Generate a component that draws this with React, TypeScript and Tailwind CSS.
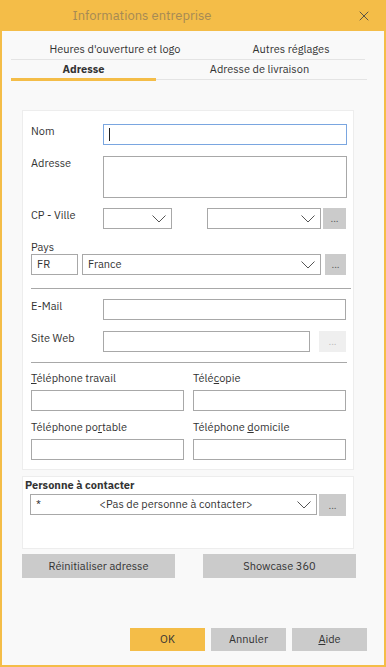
import { X } from 'lucide-react';

const font = { fontFamily: '"IBM Plex Sans", "Liberation Sans", "Noto Sans", sans-serif' };

function Chevron() {
    return (
        <svg width="14" height="8" viewBox="0 0 14 8" className="text-[#555] shrink-0">
            <polyline points="0.5,0.5 7,7 13.5,0.5" fill="none" stroke="currentColor" strokeWidth="1" />
        </svg>
    );
}

function Select({ w, text, star }: { w: string; text?: string; star?: boolean }) {
    return (
        <div className={`${w} h-[21px] border border-[#a8a8a8] bg-white flex items-center pl-[5px] pr-[5px] text-[11px] text-[#333]`}>
            {star && <span className="mr-1">*</span>}
            <span className={star ? 'flex-1 text-center pl-[10px]' : 'flex-1'}>{text}</span>
            <Chevron />
        </div>
    );
}

function Dots({ disabled, w = 'w-[21px]', h = 'h-[21px]' }: { disabled?: boolean; w?: string; h?: string }) {
    return (
        <div className={`${w} ${h} flex items-center justify-center text-[10px] ${disabled ? 'bg-[#efefef] text-[#bbb]' : 'bg-[#cbcbcb] text-[#555]'}`}>
            ...
        </div>
    );
}

function Input({ w, h = 'h-[21px]', children, focus }: { w: string; h?: string; children?: React.ReactNode; focus?: boolean }) {
    return (
        <div className={`${w} ${h} bg-white border flex items-center pl-[5px] text-[11px] text-[#333] ${focus ? 'border-[#7aa6e0]' : 'border-[#a8a8a8]'}`}>
            {children}
        </div>
    );
}

function Btn({ label, className }: { label: React.ReactNode; className: string }) {
    return <div className={`h-[23px] flex items-center justify-center text-[11px] text-[#333] ${className}`}>{label}</div>;
}

export default function App() {
    return (
        <div style={font} className="w-[386px] h-[667px] bg-[#f9f9f9] border-2 border-t-0 border-[#f4bd48] flex flex-col">
            {/* Title bar */}
            <div className="h-[31px] -mx-[2px] bg-[#f4bd48] flex items-center relative">
                <div className="w-[284px] text-center text-[13px] text-[#a58a55]">Informations entreprise</div>
                <X size={16} strokeWidth={1.3} className="absolute right-[14px] top-[8px] text-[#444]" />
            </div>

            {/* Tabs */}
            <div className="ml-[9px] mt-[9px] text-[11px] text-[#333]">
                <div className="flex w-[354px] border-b border-[#e4e4e4] h-[20px]">
                    <div className="w-[208px] text-center leading-[18px]">Heures d'ouverture et logo</div>
                    <div className="w-[144px] text-center leading-[18px]">Autres réglages</div>
                </div>
                <div className="flex w-[356px] h-[20px] border-b border-[#e4e4e4]">
                    <div className="w-[145px] text-center font-bold leading-[18px] border-b-[3px] border-[#f4bd48] -mb-[2px]">Adresse</div>
                    <div className="w-[207px] text-center leading-[18px]">Adresse de livraison</div>
                </div>
            </div>

            {/* Address panel */}
            <div className="ml-[20px] mt-[30px] w-[332px] h-[360px] bg-white border border-[#ededed] pl-[8px] pr-[6px] text-[11px] text-[#333]">
                <div className="flex mt-[13px] items-start">
                    <div className="w-[72px] leading-[15px]">Nom</div>
                    <Input w="w-[244px]" focus>
                        <span className="w-px h-[13px] bg-[#222]" />
                    </Input>
                </div>
                <div className="flex mt-[11px] items-start">
                    <div className="w-[72px] leading-[15px]">Adresse</div>
                    <Input w="w-[244px]" h="h-[42px]" />
                </div>
                <div className="flex mt-[10px] items-start">
                    <div className="w-[72px] leading-[15px]">CP - Ville</div>
                    <Select w="w-[69px]" />
                    <div className="w-[35px]" />
                    <Select w="w-[114px]" />
                    <div className="ml-[2px]"><Dots w="w-[23px]" /></div>
                </div>
                <div className="mt-[12px] leading-[13px]">Pays</div>
                <div className="flex mt-0">
                    <Input w="w-[47px]">FR</Input>
                    <div className="w-[4px]" />
                    <Select w="w-[239px]" text="France" />
                    <div className="ml-[4px]"><Dots /></div>
                </div>
                <div className="h-px bg-[#a8a8a8] mt-[13px] w-[320px]" />
                <div className="flex mt-[10px] items-start">
                    <div className="w-[72px] leading-[15px]">E-Mail</div>
                    <Input w="w-[243px]" />
                </div>
                <div className="flex mt-[11px] items-start">
                    <div className="w-[72px] leading-[15px]">Site Web</div>
                    <Input w="w-[207px]" />
                    <div className="ml-[9px]"><Dots disabled w="w-[27px]" /></div>
                </div>
                <div className="h-px bg-[#a8a8a8] mt-[10px] w-[316px]" />
                <div className="grid grid-cols-[153px_153px] gap-x-[9px] mt-[7px]">
                    <div className="leading-[16px]"><u>T</u>éléphone travail</div>
                    <div className="leading-[16px]">Télé<u>c</u>opie</div>
                    <div className="mt-[4px]"><Input w="w-[153px]" /></div>
                    <div className="mt-[4px]"><Input w="w-[153px]" /></div>
                    <div className="leading-[16px] mt-[8px]">Téléphone po<u>r</u>table</div>
                    <div className="leading-[16px] mt-[8px]">Téléphone <u>d</u>omicile</div>
                    <div className="mt-[4px]"><Input w="w-[153px]" /></div>
                    <div className="mt-[4px]"><Input w="w-[153px]" /></div>
                </div>
            </div>

            {/* Contact person panel */}
            <div className="ml-[20px] mt-[6px] w-[332px] h-[73px] bg-white border border-[#ededed] text-[11px] text-[#333]">
                <div className="pl-[2px] font-bold leading-[15px] mt-[1px]">Personne à contacter</div>
                <div className="flex pl-[7px] mt-[1px]">
                    <Select w="w-[287px]" text="<Pas de personne à contacter>" star />
                    <div className="ml-[2px]"><Dots w="w-[27px]" h="h-[22px]" /></div>
                </div>
            </div>

            <div className="flex ml-[20px] mt-[5px] gap-[28px]">
                <Btn label="Réinitialiser adresse" className="w-[153px] h-[24px] bg-[#cbcbcb]" />
                <Btn label="Showcase 360" className="w-[153px] h-[24px] bg-[#cbcbcb]" />
            </div>

            <div className="flex ml-[128px] mt-[50px] gap-[6px]">
                <Btn label="OK" className="w-[75px] bg-[#f4bd48]" />
                <Btn label="Annuler" className="w-[75px] bg-[#cbcbcb]" />
                <Btn label={<span><u>A</u>ide</span>} className="w-[75px] bg-[#cbcbcb]" />
            </div>
        </div>
    );
}
